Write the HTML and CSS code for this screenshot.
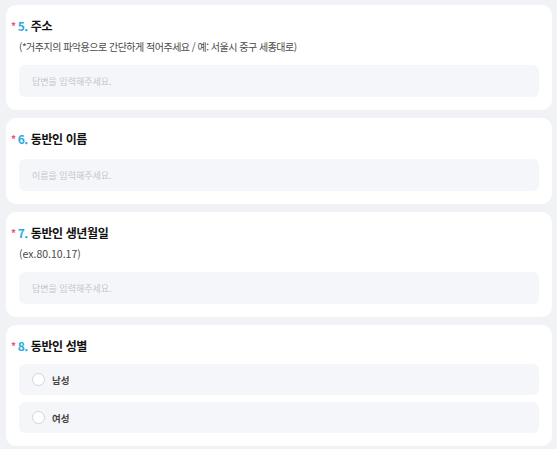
FILE: index.html
```html
<!DOCTYPE html>
<html lang="ko">
<head>
    <meta charset="UTF-8">
    <meta name="viewport" content="width=device-width, initial-scale=1.0">
    <title>신청서</title>
    <link rel="stylesheet" href="styles.css">
</head>
<body>
    <div class="form">
        <div class="card">
            <div class="q-title"><span class="req">*</span><span class="num">5.</span> 주소</div>
            <div class="q-desc">(*거주지의 파악용으로 간단하게 적어주세요 / 예: 서울시 중구 세종대로)</div>
            <input type="text" class="answer" placeholder="답변을 입력해주세요.">
        </div>

        <div class="card">
            <div class="q-title"><span class="req">*</span><span class="num">6.</span> 동반인 이름</div>
            <input type="text" class="answer" placeholder="이름을 입력해주세요.">
        </div>

        <div class="card">
            <div class="q-title"><span class="req">*</span><span class="num">7.</span> 동반인 생년월일</div>
            <div class="q-desc latin">(ex.80.10.17)</div>
            <input type="text" class="answer" placeholder="답변을 입력해주세요.">
        </div>

        <div class="card">
            <div class="q-title"><span class="req">*</span><span class="num">8.</span> 동반인 성별</div>
            <label class="option"><input type="radio" name="gender"><span class="dot"></span>남성</label>
            <label class="option"><input type="radio" name="gender"><span class="dot"></span>여성</label>
        </div>
    </div>
</body>
</html>
```

FILE: styles.css
```css
* {
    box-sizing: border-box;
    font-family: 'Noto Sans CJK KR', 'Noto Sans', sans-serif;
}
body {
    margin: 0;
    background-color: #f1f2f6;
    padding: 5px 5px 0 6px;
}
.form {
    display: flex;
    flex-direction: column;
    gap: 8px;
}
.card {
    background-color: white;
    border-radius: 10px;
    padding: 11px 13px 13px 13px;
    display: flex;
    flex-direction: column;
}
.q-title {
    font-size: 12px;
    font-weight: 700;
    color: #111;
    line-height: 20px;
    letter-spacing: -0.4px;
    margin-left: -8px;
}
.req {
    color: #f0506e;
    font-size: 10px;
    margin-right: 2px;
    vertical-align: 1px;
}
.num {
    color: #2aaae0;
}
.q-desc {
    font-size: 10px;
    color: #4a4a4a;
    line-height: 16px;
    margin-top: 3px;
    letter-spacing: -0.5px;
}
.q-desc.latin {
    letter-spacing: 0;
    font-size: 10.5px;
}
.answer {
    margin-top: 10px;
    width: 100%;
    height: 32px;
    border: none;
    border-radius: 6px;
    background-color: #f5f6f9;
    padding: 0 13px;
    font-size: 9px;
    outline: none;
}
.answer::placeholder {
    color: #c3c6cd;
}
.option {
    margin-top: 8px;
    height: 31px;
    border-radius: 6px;
    background-color: #f5f6f9;
    display: flex;
    align-items: center;
    padding-left: 13px;
    font-size: 9.5px;
    font-weight: 700;
    color: #444;
    cursor: pointer;
}
.option + .option {
    margin-top: 7px;
}
.option input {
    display: none;
}
.dot {
    width: 13px;
    height: 13px;
    border: 1px solid #d3d5db;
    border-radius: 50%;
    background: white;
    margin-right: 7px;
}
```
